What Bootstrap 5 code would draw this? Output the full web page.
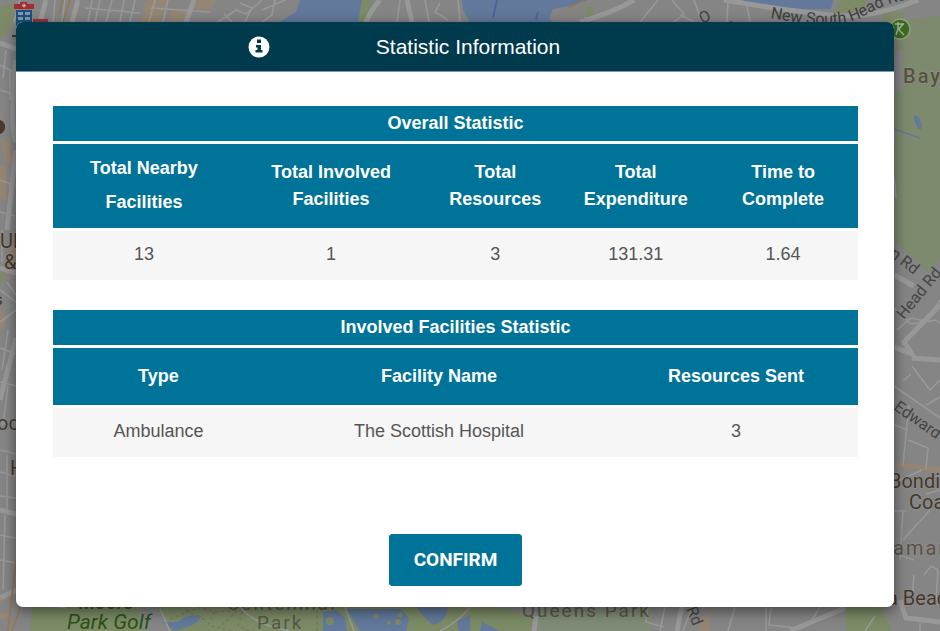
<!DOCTYPE html>
<html lang="en">
<head>
<meta charset="utf-8">
<meta name="viewport" content="width=device-width, initial-scale=1">
<title>Statistic Information</title>
<link href="https://cdn.jsdelivr.net/npm/bootstrap@5.3.0/dist/css/bootstrap.min.css" rel="stylesheet">
<style>
  body { font-family: "Liberation Sans", Arial, sans-serif; background: #858585; }
  .map-view { z-index: 0; font-family: Roboto, sans-serif; }
  .stat-page { z-index: 1; padding: 22px 46px 24px 16px; }
  .stat-dialog { border-radius: 7px; box-shadow: 0 4px 14px rgba(0,0,0,.5); }
  .stat-head { background: #003a4d; gap: 106px; padding: 0 102px 0 0; min-height: 50px; border-bottom: 1px solid #7d98a2; }
  .stat-head h1 { font-size: 21px; line-height: 24px; }
  .stat-body { padding: 31px 36px 21px 37px; }
  .stat-table { border-collapse: separate; border-spacing: 0 3px; table-layout: fixed; font-size: 18px; line-height: 27px; text-align: center; }
  .stat-table th, .stat-table td { padding: 0 24px; }
  .stat-table th { background: #007399; color: #fff; font-weight: 700; }
  .stat-table td { background: #f6f6f6; color: #555; height: 49px; padding-bottom: 3px; }
  .stat-table .group-row th { height: 35px; }
  .stat-table .tall-row th { height: 84px; }
  .stat-table .head-row th { height: 57px; }
  .stat-table .loose { line-height: 34px; padding-bottom: 2px; }
  .stat-gap { margin-top: 24px; }
  .confirm-row { padding-top: 74px; }
  .confirm-btn { background: #007399; color: #fff; font: 700 19px/24px Roboto, sans-serif; padding: 13px 24px; border: 1px solid #007399; border-radius: 3px; }
  .confirm-btn:hover { background: #006080; color: #fff; }
</style>
</head>
<body>
<div class="position-relative min-vh-100 overflow-hidden">
  <svg class="map-view position-absolute top-0 start-0 w-100 h-100" viewBox="0 0 940 631" preserveAspectRatio="xMidYMid slice" aria-hidden="true">
    <rect width="940" height="631" fill="#858585"/>
    <!-- parks -->
    <g fill="#7c8b66">
      <path d="M0 8L14 2V22L0 40Z"/>
      <path d="M362 0H372L367 20L358 24Z"/>
      <path d="M586 8L592 6L594 15L588 18L584 12Z"/>
      <path d="M842 0H868L862 9L832 14Z"/>
      <path d="M882 14L902 10L904 20L940 16V258L928 272L895 242V50L902 34L884 24Z" fill="#7d8a6d"/>
      <path d="M0 272H4V280L0 285Z"/>
      <path d="M33 600H165L190 631H30Z"/>
      <path d="M150 600H482L536 619L530 631H190Z"/>
      <path d="M538 600H655L650 631H534Z" fill="#808b77"/>
      <path d="M846 600H878L892 631H846Z"/>
    </g>
    <path d="M895 50H903V91L895 90Z" fill="#858585"/>
    <path d="M140 600L160 612L172 631H145L138 616Z" fill="#858585"/>
    <!-- built-up areas -->
    <g fill="#958574">
      <path d="M147 0H168L160 22H140Z"/><path d="M172 8L190 10L186 22H168Z"/>
      <path d="M196 0H216L211 10L190 8Z"/>
      <path d="M0 138L10 142L16 160V172L5 160Z"/><path d="M0 165H7V201L0 198Z"/>
      <path d="M10 242H16V275H5Z"/><path d="M0 308L7 318L3 330L0 328Z"/>
      <path d="M0 598L12 590V596L0 604Z"/><path d="M0 612L8 614L6 620L0 618Z"/>
      <path d="M700 618L711 612L709 631H698Z"/>
      <path d="M894 462L940 467V472L894 467Z"/>
    </g>
    <!-- water -->
    <g fill="#62799c">
      <path d="M300 0H362L358 22H280L296 12Z"/>
      <path d="M462 0H587L575 5L553 9L549 18L553 22H470L463 10Z"/>
      <path d="M742 0H833L831 9L788 10L754 6Z"/>
      <path d="M914 115Q920 116 922 126Q922 130 918 129L914 120Z"/>
      <path d="M163 622L178 622Q186 613 201 616Q199 624 184 628L175 631Z"/>
      <path d="M323 612L337 610L345 618L347 631H323Z"/>
      <path d="M346 609H401L409 618L406 631H360Z"/>
      <path d="M417 607H448Q446 622 433 625Q424 618 417 607Z"/>
      <path d="M457 621L470 615V631H459Z"/>
      <path d="M482 622L500 631H480Z"/>
    </g>
    <path d="M497 0L493 18M538 12L536 20" stroke="#4d6596" stroke-width="2" fill="none"/>
    <path d="M894 129L920 138" stroke="#62799c" stroke-width="1.5"/>
    <g fill="#7c8b66"><circle cx="376" cy="616" r="2.5"/><circle cx="400" cy="615" r="2.5"/><circle cx="389" cy="623" r="2"/><circle cx="398" cy="622" r="3"/><circle cx="330" cy="621" r="4"/></g>
    <!-- roads -->
    <g fill="none" stroke="#989898">
      <g stroke-width="5">
        <path d="M46 0L40 22M0 43L16 49M78 0L72 22M194 0L186 22M380 0Q370 12 366 22"/>
        <path d="M407 0L412 22M580 22Q615 12 634 0M724 0L780 9L830 15Q868 20 918 0"/>
        <path d="M16 60Q10 130 16 142M16 150L7 230M0 268L16 273M16 338L0 400M0 510L16 514M0 598L16 590M17 600L66 606"/>
        <path d="M894 275L914 286M894 347L912 354L904 342L940 305M912 358L940 360M900 600L906 618L940 622M683 600L677 631M536 616L534 631M790 631L845 608"/>
      </g>
      <g stroke-width="1.6">
        <path d="M20 0L14 22M55 0L53 22M65 0L62 22M92 0L88 22M100 0L95 22M112 0L106 22M124 0L120 22M135 0L130 22M155 0L149 22M168 0L163 22M85 8L140 13M150 8L210 12"/>
        <path d="M218 22L236 10L246 14L262 0M224 14L232 22M240 3L252 8L245 22M262 10L285 0M275 0L272 15L262 22M400 0L397 22M425 0L429 22M440 3L435 12L448 20M458 0L460 22"/>
        <path d="M672 0L684 14L674 22M694 0L702 22M728 0L727 22M747 6L750 22M658 0L640 22M680 15L695 22"/>
        <path d="M0 65L14 72M6 50L3 78M0 90L16 95M10 70V100M0 180L16 186M0 212L15 216M2 230V262M0 290L16 302M0 322L16 310M7 282L16 295M0 348L16 354M8 330L2 370M0 382L16 386M8 386L3 425M0 450L16 454M0 472L16 476M0 496L16 498M7 455V510M0 535L16 538M5 515L3 590M0 560L16 563"/>
        <path d="M894 308L911 324L936 320L940 323M897 330L911 318L930 322M912 366L930 390L940 380M911 374L903 381M894 386L940 418M909 405L903 465M908 440L928 448L926 470M894 425L908 430M922 470L900 480M903 511L900 560M894 511L906 511M894 553L914 560M930 510L903 540M924 575L931 566L938 570L936 600M914 575L912 600M926 405L940 397M926 494L940 490M894 175L896 198M927 320L940 300"/>
        <path d="M665 607L660 631M648 607L646 622L664 627M735 607L728 631M766 607V631M771 607L769 625L798 628M692 607L683 631M820 607L812 620M865 631L875 616M920 623V631M240 607Q255 625 290 631M345 607L354 631M470 607Q458 622 440 631M160 609L170 631"/>
      </g>
    </g>
    <g fill="none" stroke="#777562" stroke-width="1.2" stroke-dasharray="3 3"><path d="M170 619L200 607L215 612L208 625L232 631M215 612L243 610L238 626L250 631M186 610L205 620M317 610V631M222 625L240 608"/></g>
    <g fill="none" stroke="#94784e" stroke-width="1.5"><path d="M62 0L59 14M70 0L63 22M16 560L8 631M21 605L12 631M568 8L584 0"/></g>
    <!-- street and area names -->
    <g font-size="16" fill="#444">
      <path id="shr" d="M770 18Q838 31 862 17Q884 4 905 0L920 -4" fill="none"/>
      <text fill="#3e3e3e"><textPath href="#shr">New South Head Rd</textPath></text>
      <text transform="translate(702 24) rotate(-25)">O</text>
      <text transform="translate(724 30) rotate(30)">K</text>
      <text transform="translate(882 250) rotate(38)">nn Rd</text>
      <text transform="translate(904 320) rotate(-51)">Head Rd</text>
      <text transform="translate(893 409) rotate(35)">Edward St</text>
      <text transform="translate(686 609) rotate(68)">Rd</text>
    </g>
    <g font-size="20" fill="#463729" stroke="#939393" stroke-width="1" paint-order="stroke">
      <text x="903" y="83" letter-spacing="2" fill="#565040" font-weight="500">Bay</text>
      <text x="0" y="248">UNSW</text><text x="4" y="269">&amp;</text><text x="-6" y="305" font-size="17">s</text>
      <text x="-3" y="430">oc</text><text x="10" y="475">H</text>
      <text x="889" y="488">Bondi</text><text x="909" y="509">Coast</text>
      <text x="893" y="555" letter-spacing="2" fill="#5b5043">amara</text>
      <text x="887" y="605">a Beach</text>
    </g>
    <g font-size="19" fill="#575748">
      <text x="227" y="610" letter-spacing="2">Centennial</text><text x="257" y="629" letter-spacing="2">Park</text>
      <text x="522" y="617" letter-spacing="2">Queens Park</text>
      <text x="78" y="609" font-weight="500" fill="#315420">Moore</text>
      <text x="67" y="629" font-size="21" font-style="italic" fill="#285315">Park Golf</text>
    </g>
    <!-- map markers -->
    <circle cx="900" cy="29" r="10" fill="#3e6b21" stroke="#8fa181" stroke-width="1.5"/>
    <path d="M895 24H904M898 22V29L896 35M898 29L904 35M903 24L899 29" fill="none" stroke="#aab79e" stroke-width="1.4"/>
    <circle cx="-2" cy="127" r="8" fill="#4d382c" stroke="#8d8983" stroke-width="1.5"/>
    <path d="M14 4H20V2H27V4H34V9H14Z" fill="#a32e32"/><path d="M22 5.500H26M24 3.500V7.500" stroke="#c5a5a5" stroke-width="1.500"/>
    <path d="M16 10H32V26H16Z" fill="#1e4f80"/><path d="M18 12H23V15H18ZM25 12H30V15H25ZM18 17H23V20H18ZM25 17H30V20H25Z" fill="#7d9bad"/>
    <path d="M33 19H48V23H33Z" fill="#983239"/><path d="M12 36H17" stroke="#222" stroke-width="1.500"/>
  </svg>

  <main class="stat-page position-relative">
    <section class="stat-dialog bg-white overflow-hidden" role="dialog" aria-labelledby="dialog-title">
      <header class="stat-head d-flex align-items-center justify-content-center text-white">
        <svg width="22" height="22" viewBox="0 0 22 22" aria-hidden="true"><circle cx="11" cy="11" r="10.500" fill="#fff"/><path d="M9 3.500H13V7H9ZM8 9H13V14H14.500V16.500H7.500V14H9.500V11.500H8Z" fill="#003a4d"/></svg>
        <h1 class="m-0 fw-normal" id="dialog-title">Statistic Information</h1>
      </header>
      <div class="stat-body">
        <table class="stat-table w-100">
          <colgroup><col style="width:22.6%"><col style="width:23.9%"><col style="width:16.9%"><col style="width:18%"><col style="width:18.6%"></colgroup>
          <thead>
            <tr class="group-row"><th colspan="5">Overall Statistic</th></tr>
            <tr class="tall-row"><th class="loose" scope="col">Total Nearby Facilities</th><th scope="col">Total Involved Facilities</th><th class="px-3" scope="col">Total Resources</th><th class="px-3" scope="col">Total Expenditure</th><th scope="col">Time to Complete</th></tr>
          </thead>
          <tbody><tr><td>13</td><td>1</td><td>3</td><td>131.31</td><td>1.64</td></tr></tbody>
        </table>
        <table class="stat-table stat-gap w-100">
          <colgroup><col style="width:26.2%"><col style="width:43.5%"><col style="width:30.3%"></colgroup>
          <thead>
            <tr class="group-row"><th colspan="3">Involved Facilities Statistic</th></tr>
            <tr class="head-row"><th class="loose" scope="col">Type</th><th scope="col">Facility Name</th><th scope="col">Resources Sent</th></tr>
          </thead>
          <tbody><tr><td>Ambulance</td><td>The Scottish Hospital</td><td>3</td></tr></tbody>
        </table>
        <div class="confirm-row d-flex justify-content-center"><button type="button" class="btn confirm-btn">CONFIRM</button></div>
      </div>
    </section>
  </main>
</div>
<script src="https://cdn.jsdelivr.net/npm/bootstrap@5.3.0/dist/js/bootstrap.bundle.min.js"></script>
</body>
</html>
